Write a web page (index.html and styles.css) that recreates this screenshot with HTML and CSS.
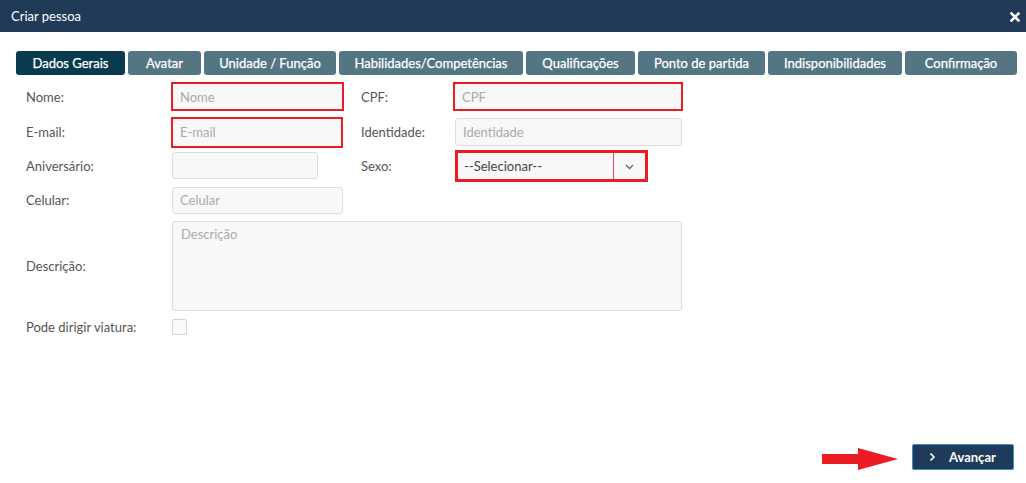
FILE: index.html
```html
<!DOCTYPE html>
<html lang="pt-BR">
<head>
    <meta charset="UTF-8">
    <meta name="viewport" content="width=device-width, initial-scale=1.0">
    <title>Criar pessoa</title>
    <link rel="stylesheet" href="styles.css">
</head>
<body>
    <div class="modal">
        <div class="modal-header">
            <span class="modal-title">Criar pessoa</span>
            <span class="modal-close">
                <svg width="10" height="10" viewBox="0 0 10 10"><path d="M1.5 1.5 L8.5 8.5 M8.5 1.5 L1.5 8.5" stroke="#fff" stroke-width="2.6" stroke-linecap="square"/></svg>
            </span>
        </div>

        <div class="modal-body">
            <ul class="tabs">
                <li class="tab active tab-dados">Dados Gerais</li>
                <li class="tab tab-avatar">Avatar</li>
                <li class="tab tab-unidade">Unidade / Função</li>
                <li class="tab tab-habilidades">Habilidades/Competências</li>
                <li class="tab tab-qualificacoes">Qualificações</li>
                <li class="tab tab-ponto">Ponto de partida</li>
                <li class="tab tab-indisp">Indisponibilidades</li>
                <li class="tab tab-confirmacao">Confirmação</li>
            </ul>

            <form class="form">
                <div class="row row-1">
                    <label for="nome">Nome:</label>
                    <input class="input w-171 marked" id="nome" placeholder="Nome">
                    <label for="cpf">CPF:</label>
                    <input class="input w-228 marked" id="cpf" placeholder="CPF">
                </div>
                <div class="row row-2">
                    <label for="email">E-mail:</label>
                    <input class="input w-170 marked" id="email" placeholder="E-mail">
                    <label for="identidade">Identidade:</label>
                    <input class="input w-227 shift-1" id="identidade" placeholder="Identidade">
                </div>
                <div class="row row-3">
                    <label for="aniversario">Aniversário:</label>
                    <input class="input w-146" id="aniversario">
                    <label>Sexo:</label>
                    <div class="select">
                        <span class="select-value">--Selecionar--</span>
                        <span class="select-arrow">
                            <svg width="9" height="6" viewBox="0 0 9 6"><path d="M1 1 L4.5 4.5 L8 1" fill="none" stroke="#666" stroke-width="1.3"/></svg>
                        </span>
                    </div>
                </div>
                <div class="row row-4">
                    <label for="celular">Celular:</label>
                    <input class="input w-171" id="celular" placeholder="Celular">
                </div>
                <div class="row row-5">
                    <label for="descricao">Descrição:</label>
                    <textarea class="textarea" id="descricao" placeholder="Descrição"></textarea>
                </div>
                <div class="row row-6">
                    <label for="viatura">Pode dirigir viatura:</label>
                    <span class="checkbox" id="viatura"></span>
                </div>
            </form>
        </div>

        <div class="modal-footer">
            <svg class="hint-arrow" width="76" height="22" viewBox="0 0 76 22"><path d="M0 6 H36 V0 L76 11 L36 22 V16 H0 Z" fill="#ec1c24"/></svg>
            <button type="button" class="btn-next">
                <svg width="7" height="10" viewBox="0 0 7 10"><path d="M1.5 1.5 L5 5 L1.5 8.5" fill="none" stroke="#fff" stroke-width="1.6"/></svg>
                <span>Avançar</span>
            </button>
        </div>
    </div>
</body>
</html>
```

FILE: styles.css
```css
/* base */
* {box-sizing: border-box}
body {margin: 0; background: #fff; font-family: Lato, "Open Sans", sans-serif; font-size: 13px; color: #555}
ul {margin: 0; padding: 0; list-style: none}

.modal {
    height: 483px;
    display: flex;
    flex-direction: column;
}

/* header */
.modal-header {
    height: 32px;
    background: #213a58;
    color: #fff;
    display: flex;
    align-items: center;
    justify-content: space-between;
    padding: 0 6px 0 11px;
}
.modal-title {font-size: 13px}
.modal-close {display: flex; padding-top: 1px}

.modal-body {flex: 1}

/* tabs */
.tabs {
    display: flex;
    gap: 3px;
    margin: 19px 0 0 16px;
}
.tab {
    height: 24px;
    line-height: 24px;
    text-align: center;
    border-radius: 3px;
    background: #537682;
    color: #fff;
    font-size: 13px;
    -webkit-text-stroke: 0.25px #fff;
    white-space: nowrap;
}
.tab.active {background: #093b4f}
.tab-dados {width: 109px}
.tab-avatar {width: 73px}
.tab-unidade {width: 132px}
.tab-habilidades {width: 184px}
.tab-qualificacoes {width: 109px}
.tab-ponto {width: 127px}
.tab-indisp {width: 134px}
.tab-confirmacao {width: 112px}

/* form */
.form {padding: 7px 0 0 26px}
.row {
    display: grid;
    grid-template-columns: 146px 189px 93px 228px;
    align-items: center;
    height: 30px;
    margin-bottom: 4px;
}
.row-1 {height: 29px}
.row-2 {height: 34px; margin-bottom: 0}
.row-3 {height: 33px; margin-bottom: 4px}
.row-4 {height: 28px; margin-bottom: 6px}
.row-5 {height: 91px; margin-bottom: 7px}
.row-6 {height: 17px}

.row label {color: #555}

.input, .textarea {
    height: 27px;
    border: 1px solid #ddd;
    border-radius: 3px;
    background: #f8f8f8;
    padding: 0 7px;
    font-family: inherit;
    font-size: 13px;
    color: #555;
}
.input::placeholder, .textarea::placeholder {color: #aaa}
.w-146 {width: 146px}
.w-170 {width: 170px; height: 29px}
.w-171 {width: 171px}
.w-227 {width: 227px; height: 28px}
.w-228 {width: 228px}
.shift-1 {margin-left: 1px}

/* anotação em vermelho */
.marked {
    border-radius: 0;
    outline: 2px solid #ec1c24;
    outline-offset: -1px;
}

.textarea {
    grid-column: 2 / 5;
    height: 90px;
    padding: 4px 8px;
    resize: none;
}

.select {
    width: 193px;
    height: 32px;
    margin-left: 1px;
    border: 3px solid #ec1c24;
    background: #f8f8f8;
    display: flex;
    align-items: stretch;
}
.select-value {
    flex: 1;
    display: flex;
    align-items: center;
    padding-left: 6px;
    color: #444;
    border-right: 1px solid #e2416a;
}
.select-arrow {
    width: 31px;
    display: flex;
    align-items: center;
    justify-content: center;
    padding-top: 3px;
}

.checkbox {
    width: 15px;
    height: 16px;
    border: 1px solid #d4d4d4;
    border-radius: 2px;
    background: #fafafa;
}

/* footer */
.modal-footer {
    display: flex;
    justify-content: flex-end;
    align-items: center;
    padding: 0 12px 13px 0;
}
.hint-arrow {margin-right: 14px; margin-top: 5px}
.btn-next {
    width: 102px;
    height: 26px;
    background: #1f3a5a;
    border: 1px solid #3b8fc0;
    border-radius: 2px;
    color: #fff;
    font-family: inherit;
    font-size: 13px;
    font-weight: 700;
    display: flex;
    align-items: center;
    gap: 13px;
    padding: 0 0 0 16px;
}
```
